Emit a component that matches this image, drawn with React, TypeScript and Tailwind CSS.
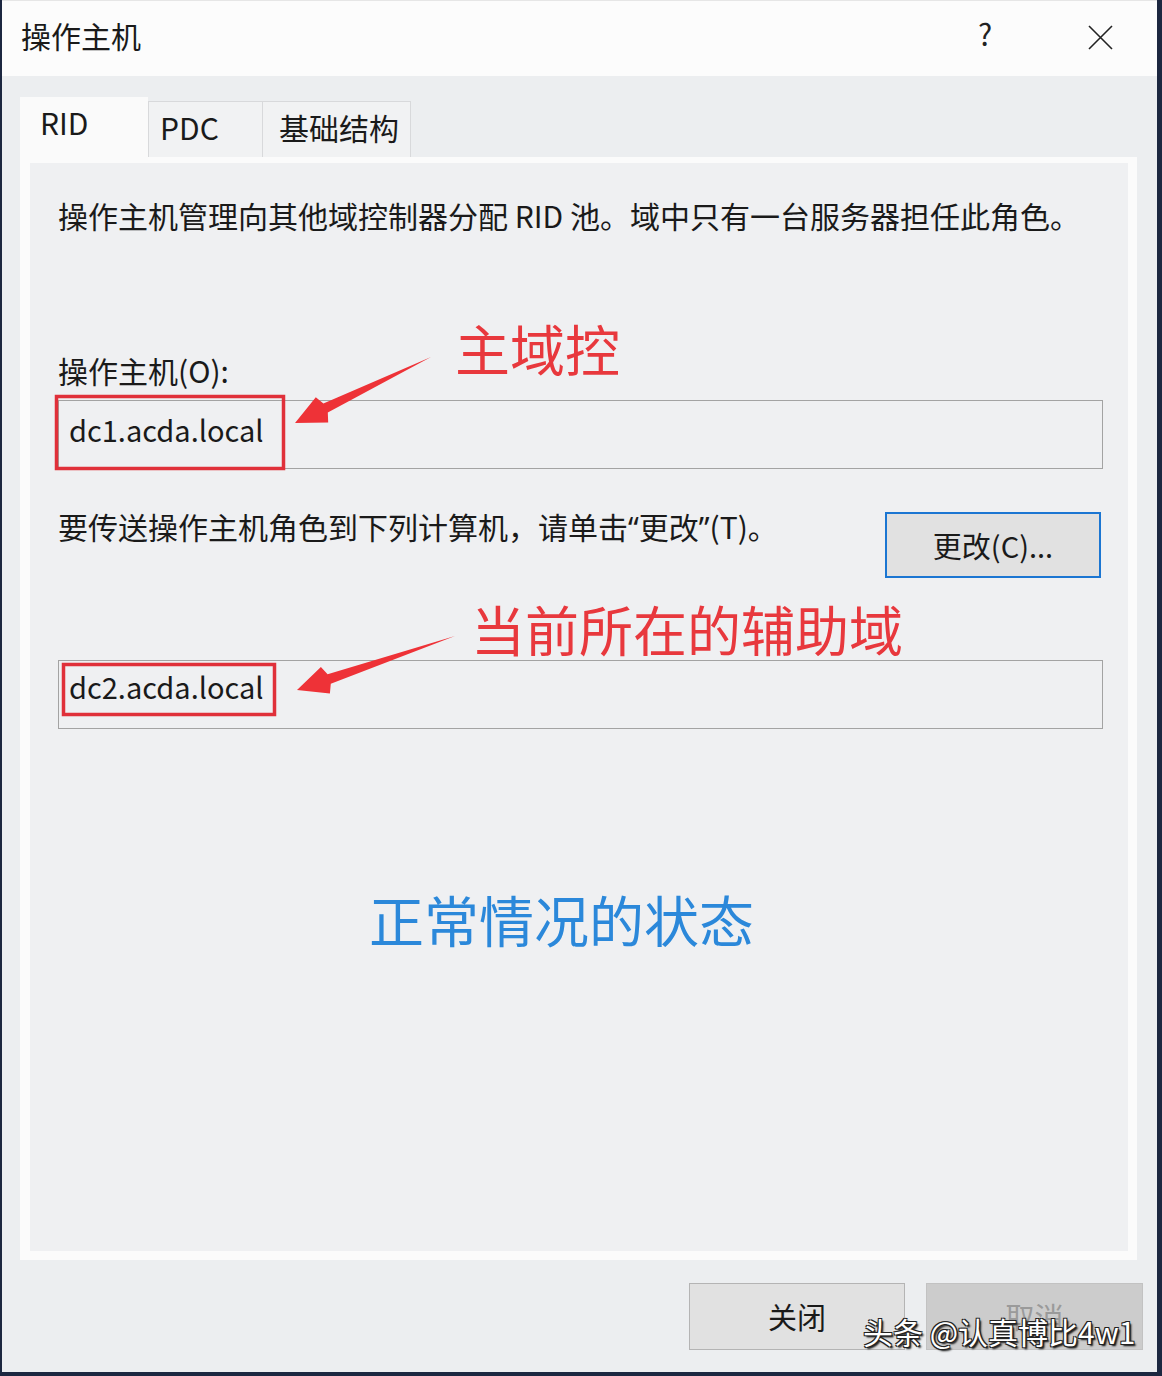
import React from "react";

const arrow1 = "431,357 323.4,403.5 315.8,397.2 295,423 328.2,422.4 327.8,412.5";
const arrow2 = "455,636 327.6,674.3 320.9,667.1 297,690 329.9,693.5 330.8,683.7";

export default function App() {
  return (
    <div className="relative w-[1162px] h-[1376px] flex flex-col bg-[#eceef0] border-l-2 border-r-[5px] border-b-[4px] border-[#1c2740] overflow-hidden text-[#1a1a1a] font-['Noto_Sans_CJK_SC','Noto_Sans',sans-serif]">
      {/* Title bar */}
      <div className="h-[76px] shrink-0 bg-[#fcfcfc] border-t border-[#e6e6e6] flex items-center pl-[19px]">
        <div className="text-[30px] leading-none pb-[7px]">操作主机</div>
        <div className="ml-auto flex items-center">
          <div className="w-[30px] text-[30px] leading-none text-[#222] mr-[80px] mb-[12px] ml-[2px]">?</div>
          <svg width="25" height="25" viewBox="0 0 25 25" className="mr-[44px] mb-[3px]">
            <path d="M1 1 L24 24 M24 1 L1 24" stroke="#222" strokeWidth="1.6" fill="none" />
          </svg>
        </div>
      </div>

      {/* Body */}
      <div className="flex-1 flex flex-col pl-[18px] pt-[21px]">
        {/* Tabs */}
        <div className="h-[60px] flex items-end">
          <div className="relative z-10 w-[128px] h-[63px] mb-[-3px] bg-[#fafafa] flex items-center pl-[20px] pb-[14px] text-[30px] leading-none">
            RID
          </div>
          <div className="w-[115px] h-[56px] bg-[#f1f2f3] border border-b-0 border-[#d8d9db] flex items-center pl-[11px] pb-[5px] text-[30px] leading-none">
            PDC
          </div>
          <div className="w-[148px] h-[56px] bg-[#f1f2f3] border border-b-0 border-l-0 border-[#d8d9db] flex items-center pl-[16px] pb-[5px] text-[30px] leading-none">
            基础结构
          </div>
        </div>

        {/* Panel */}
        <div className="w-[1117px] h-[1103px] bg-[#eff0f2] border-l-[10px] border-t-[6px] border-r-[9px] border-b-[9px] border-[#fbfbfb] flex flex-col pl-[28px] pr-[25px] pt-[32px]">
          <div className="text-[30px] leading-[40px] whitespace-nowrap">
            操作主机管理向其他域控制器分配 RID 池。域中只有一台服务器担任此角色。
          </div>
          <div className="mt-[115px] text-[30px] leading-[40px]">操作主机(O):</div>
          <div className="mt-[10px] h-[69px] border border-[#a3a3a3] bg-[#eff0f2] flex items-center pl-[10px] pb-[10px] text-[29px] leading-none">
            dc1.acda.local
          </div>
          <div className="mt-[37px] flex items-start">
            <div className="text-[30px] leading-[40px] whitespace-nowrap">
              要传送操作主机角色到下列计算机，请单击<span className="font-['Noto_Sans']">“</span>更改<span className="font-['Noto_Sans']">”</span>(T)。
            </div>
            <div className="ml-auto mr-[2px] mt-[6px] w-[216px] h-[66px] border-2 border-[#1b76d2] bg-[#e1e1e1] flex items-center justify-center text-[29px] leading-none">
              更改(C)...
            </div>
          </div>
          <div className="mt-[82px] h-[69px] border border-[#a3a3a3] bg-[#eff0f2] flex items-start pt-[11px] pl-[10px] text-[29px] leading-none">
            dc2.acda.local
          </div>
          <div className="mt-[162px] ml-[311px] text-[55px] leading-none text-[#2b88da] whitespace-nowrap">
            正常情况的状态
          </div>
        </div>

        {/* Bottom buttons */}
        <div className="mt-[23px] flex justify-end pr-[14px] gap-[21px]">
          <div className="w-[216px] h-[67px] bg-[#e1e1e1] border border-[#b4b4b4] flex items-center justify-center text-[29px] leading-none">
            关闭
          </div>
          <div className="w-[217px] h-[67px] bg-[#cccccc] border border-[#c2c2c2] flex items-center justify-center text-[29px] leading-none text-[#9a9a9a]">
            取消
          </div>
        </div>
      </div>

      {/* Annotation overlays */}
      <svg className="absolute left-[-2px] top-0 pointer-events-none" width="1162" height="1376" viewBox="0 0 1162 1376">
        <rect x="56.5" y="396.5" width="227" height="72" fill="none" stroke="#e0303a" strokeWidth="3.5" />
        <rect x="63.5" y="664.5" width="211" height="50" fill="none" stroke="#e0303a" strokeWidth="3.5" />
        <polygon points={arrow1} fill="#ee3237" />
        <polygon points={arrow2} fill="#ee3237" />
      </svg>
      <div className="absolute left-[453px] top-[320px] text-[55px] leading-none text-[#e8383d] whitespace-nowrap">
        主域控
      </div>
      <div className="absolute left-[469px] top-[602px] text-[54px] leading-none text-[#e8383d] whitespace-nowrap">
        当前所在的辅助域
      </div>
      <div className="absolute left-[861px] top-[1316px] text-[30px] leading-none text-white whitespace-nowrap [text-shadow:1px_1px_0_#222,-1px_-1px_0_#222,1px_-1px_0_#222,-1px_1px_0_#222,2px_2px_2px_#000]">
        头条 @认真博比4w1
      </div>
    </div>
  );
}
